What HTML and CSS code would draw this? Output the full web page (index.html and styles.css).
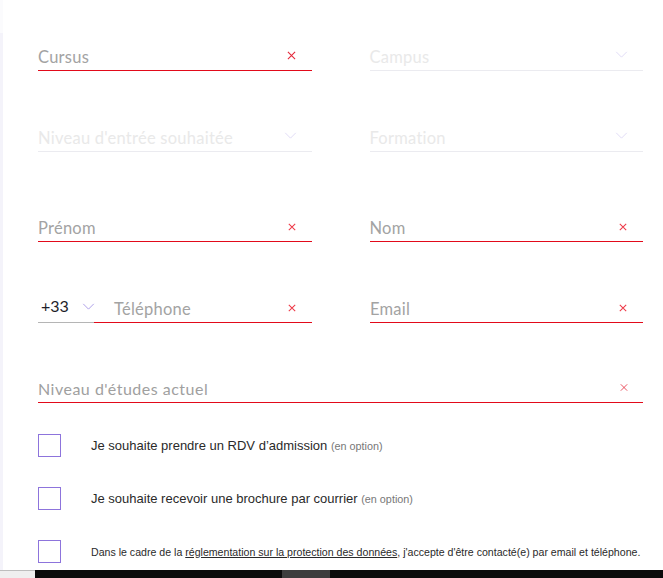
FILE: index.html
```html
<!DOCTYPE html>
<html lang="fr">
<head>
<meta charset="utf-8">
<link rel="stylesheet" href="styles.css">
</head>
<body>
<div class="page">
  <div class="form">
    <div class="row r1">
      <div class="field error">
        <span class="label">Cursus</span>
        <span class="x"><svg viewBox="0 0 10 10" width="9" height="9"><path d="M1 1L9 9M9 1L1 9" stroke="#e4283a" stroke-width="1.2"/></svg></span>
      </div>
      <div class="field disabled">
        <span class="label">Campus</span>
        <span class="chev"><svg viewBox="0 0 14 8" width="13" height="7"><path d="M1 1L7 7L13 1" fill="none" stroke="#ddd7f5" stroke-width="1"/></svg></span>
      </div>
    </div>
    <div class="row r2">
      <div class="field disabled">
        <span class="label">Niveau d'entrée souhaitée</span>
        <span class="chev"><svg viewBox="0 0 14 8" width="13" height="7"><path d="M1 1L7 7L13 1" fill="none" stroke="#ddd7f5" stroke-width="1"/></svg></span>
      </div>
      <div class="field disabled">
        <span class="label">Formation</span>
        <span class="chev"><svg viewBox="0 0 14 8" width="13" height="7"><path d="M1 1L7 7L13 1" fill="none" stroke="#ddd7f5" stroke-width="1"/></svg></span>
      </div>
    </div>
    <div class="row r3">
      <div class="field error">
        <span class="label">Prénom</span>
        <span class="x"><svg viewBox="0 0 10 10" width="8" height="8"><path d="M1 1L9 9M9 1L1 9" stroke="#ee3a48" stroke-width="1.3"/></svg></span>
      </div>
      <div class="field error">
        <span class="label">Nom</span>
        <span class="x"><svg viewBox="0 0 10 10" width="8" height="8"><path d="M1 1L9 9M9 1L1 9" stroke="#ee3a48" stroke-width="1.3"/></svg></span>
      </div>
    </div>
    <div class="row r4">
      <div class="phone">
        <div class="prefix">
          <span class="code">+33</span>
          <span class="chev2"><svg viewBox="0 0 14 8" width="13" height="7"><path d="M1 1L7 7L13 1" fill="none" stroke="#a493e6" stroke-width="1"/></svg></span>
        </div>
        <div class="field error tel">
          <span class="label">Téléphone</span>
          <span class="x"><svg viewBox="0 0 10 10" width="8" height="8"><path d="M1 1L9 9M9 1L1 9" stroke="#ee3a48" stroke-width="1.3"/></svg></span>
        </div>
      </div>
      <div class="field error">
        <span class="label">Email</span>
        <span class="x"><svg viewBox="0 0 10 10" width="8" height="8"><path d="M1 1L9 9M9 1L1 9" stroke="#ee3a48" stroke-width="1.3"/></svg></span>
      </div>
    </div>
    <div class="row r5">
      <div class="field error wide">
        <span class="label thin">Niveau d'études actuel</span>
        <span class="x"><svg viewBox="0 0 10 10" width="8" height="9"><path d="M1 1L9 9M9 1L1 9" stroke="#e4283a" stroke-width="1"/></svg></span>
      </div>
    </div>
    <div class="checks">
      <label class="check">
        <span class="box"></span>
        <span class="ctext">Je souhaite prendre un RDV d’admission <small>(en option)</small></span>
      </label>
      <label class="check">
        <span class="box"></span>
        <span class="ctext">Je souhaite recevoir une brochure par courrier <small>(en option)</small></span>
      </label>
      <label class="check">
        <span class="box"></span>
        <span class="ctext small">Dans le cadre de la <u>réglementation sur la protection des données</u>, j'accepte d'être contacté(e) par email et téléphone.</span>
      </label>
    </div>
  </div>
  <div class="bottom">
    <div class="bl"></div>
    <div class="br"><div class="thumb"></div></div>
  </div>
</div>
</body>
</html>
```
FILE: styles.css
```css
* { box-sizing: border-box; }
html, body { margin: 0; padding: 0; background: #fff; }
body { width: 663px; height: 578px; overflow: hidden; font-family: "Lato", "Liberation Sans", sans-serif; }
.page { width: 663px; height: 578px; display: flex; flex-direction: column; }
.form {
  height: 570px;
  padding: 0 20px 0 35px;
  border-left: 3px solid #f4f3fa;
  position: relative;
}
.form::before {
  content: "";
  position: absolute;
  left: -3px; top: 0;
  width: 3px; height: 33px;
  background: #fbfbfd;
}
.row { display: flex; gap: 58px; }
.r1 { padding-top: 40px; }
.r2 { margin-top: 50px; }
.r3 { margin-top: 59px; }
.r4 { margin-top: 50px; }
.r5 { margin-top: 49px; }
.field {
  width: 274px;
  height: 31px;
  display: flex;
  align-items: flex-end;
  justify-content: space-between;
  padding: 0 16px 3px 0;
  border-bottom: 1px solid #ebebef;
}
.field.error { border-bottom: 1px solid #e20a1a; }
.field.disabled { border-bottom-color: #ebebf0; }
.label { font-size: 16.5px; line-height: 20px; color: #a3a3a3; letter-spacing: 0.25px; }
.disabled .label { color: #e9e9e9; }
.label.thin { font-size: 16px; letter-spacing: 0.5px; color: #a0a0a0; }
.x { display: flex; margin-bottom: 7px; }
.chev { display: flex; margin-bottom: 9px; margin-right: -1px; }
.phone { display: flex; width: 274px; }
.prefix {
  width: 56px;
  height: 31px;
  display: flex;
  align-items: flex-end;
  padding: 0 0 6px 3px;
  border-bottom: 1px solid #b5b5b5;
  gap: 13px;
}
.code { font-size: 16px; line-height: 20px; color: #1e1e2a; }
.chev2 { display: flex; margin-bottom: 6px; }
.field.tel { width: 218px; padding-left: 20px; }
.field.wide { width: 605px; padding-right: 15px; }
.checks { margin-top: 31px; display: flex; flex-direction: column; gap: 30px; }
.check { display: flex; align-items: center; gap: 30px; height: 23px; }
.box { width: 23px; height: 23px; border: 1.5px solid #8d74dc; flex: none; }
.ctext { font-family: "Liberation Sans", Arial, sans-serif; font-size: 13px; color: #2a2a2a; }
.ctext small { font-size: 10.8px; color: #777; }
.ctext.small { font-size: 10.6px; color: #2a2a2a; }
.ctext u { text-underline-offset: 1px; }
.bottom { display: flex; height: 8px; }
.bl { width: 35px; background: #efefef; border-top: 1px solid #bdbdbd; }
.br { flex: 1; background: #0b0b0b; padding-left: 247px; }
.thumb { width: 48px; height: 8px; background: #3d3d3d; }
```
